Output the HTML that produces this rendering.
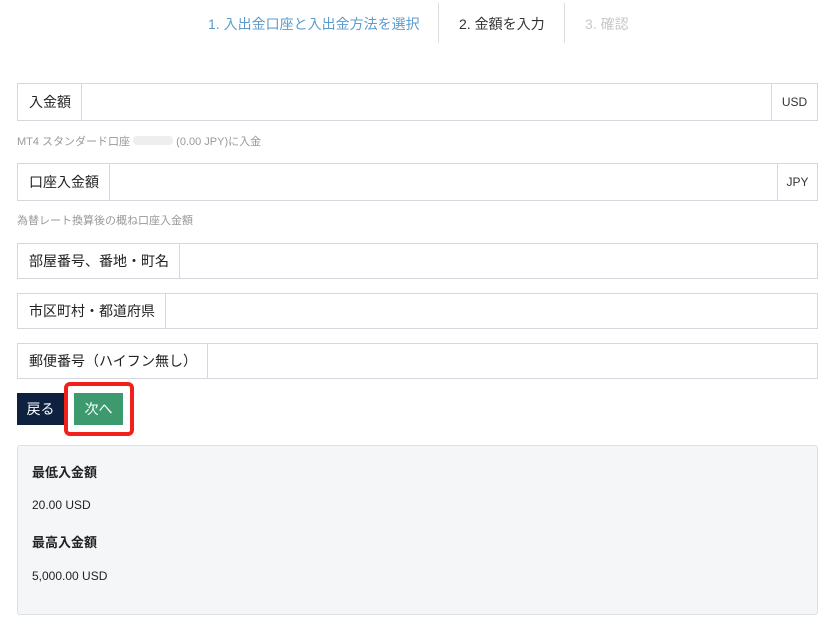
<!DOCTYPE html>
<html><head><meta charset="utf-8"><style>
*{box-sizing:border-box;margin:0;padding:0}
body{width:840px;height:624px;background:#fff;font-family:"Liberation Sans","Noto Sans CJK JP",sans-serif;color:#222;position:relative;overflow:hidden}
.a{position:absolute}
.step{top:14px;font-size:14px}
.sep{top:3px;width:1px;height:40px;background:#ddd}
.f{left:17px;width:801px;border:1px solid #d4d7dd;display:flex;font-size:14px}
.f .l{border-right:1px solid #d4d7dd;display:flex;align-items:center;padding-left:11px}
.f .m{flex:1}
.f .r{border-left:1px solid #d4d7dd;display:flex;align-items:center;justify-content:center;font-size:12px;color:#333}
.h{left:17px;font-size:11px;color:#999}
.p{font-size:13px}
</style></head><body>
<div class="a step" style="left:208px;color:#5c9ccb">1. 入出金口座と入出金方法を選択</div>
<div class="a sep" style="left:438px"></div>
<div class="a step" style="left:459px;color:#333">2. 金額を入力</div>
<div class="a sep" style="left:564px"></div>
<div class="a step" style="left:585px;color:#c8c8c8">3. 確認</div>

<div class="a f" style="top:83px;height:38px"><div class="l" style="width:64px">入金額</div><div class="m"></div><div class="r" style="width:46px">USD</div></div>
<div class="a h" style="top:133px">MT4 スタンダード口座 <span style="display:inline-block;width:40px;height:9px;background:#eee;border-radius:4px"></span> (0.00 JPY)に入金</div>
<div class="a f" style="top:163px;height:38px"><div class="l" style="width:92px">口座入金額</div><div class="m"></div><div class="r" style="width:40px">JPY</div></div>
<div class="a h" style="top:212px">為替レート換算後の概ね口座入金額</div>
<div class="a f" style="top:243px;height:36px"><div class="l" style="width:162px">部屋番号、番地・町名</div><div class="m"></div></div>
<div class="a f" style="top:293px;height:36px"><div class="l" style="width:148px">市区町村・都道府県</div><div class="m"></div></div>
<div class="a f" style="top:343px;height:36px"><div class="l" style="width:190px">郵便番号（ハイフン無し）</div><div class="m"></div></div>

<div class="a" style="left:17px;top:393px;width:47px;height:32px;background:#0e2240;color:#fff;font-size:14px;display:flex;align-items:center;justify-content:center">戻る</div>
<div class="a" style="left:64px;top:382px;width:70px;height:54px;border:4px solid #f2201a;border-radius:6px"></div>
<div class="a" style="left:74px;top:393px;width:49px;height:32px;background:#3d9a6e;color:#fff;font-size:14px;display:flex;align-items:center;justify-content:center">次へ</div>

<div class="a" style="left:17px;top:445px;width:801px;height:170px;background:#f5f6f8;border:1px solid #dcdfe3;border-radius:3px"></div>
<div class="a p" style="left:32px;top:462px;font-weight:bold">最低入金額</div>
<div class="a p" style="left:32px;top:498px;font-size:12px">20.00 USD</div>
<div class="a p" style="left:32px;top:532px;font-weight:bold">最高入金額</div>
<div class="a p" style="left:32px;top:569px;font-size:12px">5,000.00 USD</div>
</body></html>
